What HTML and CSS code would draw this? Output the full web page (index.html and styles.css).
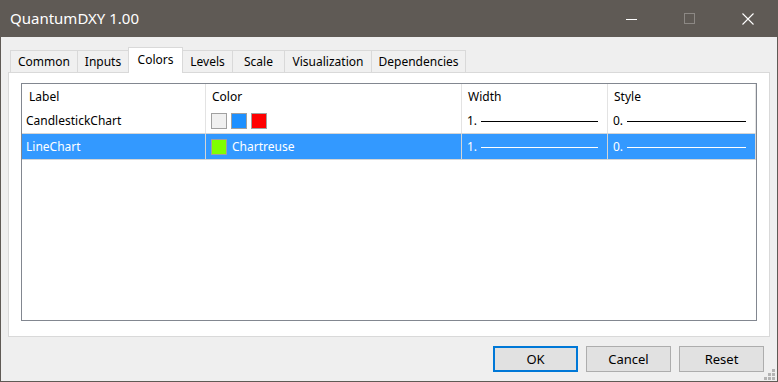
FILE: index.html
```html
<!DOCTYPE html>
<html lang="en">
<head>
  <meta charset="UTF-8">
  <title>QuantumDXY 1.00</title>
  <link rel="stylesheet" href="styles.css">
</head>
<body>
  <div class="window">
    <div class="titlebar">
      <span class="title">QuantumDXY 1.00</span>
      <div class="controls">
        <span class="ctl"><svg width="12" height="12" viewBox="0 0 12 12"><path d="M0 6.5h11" stroke="#fff" stroke-width="1"/></svg></span>
        <span class="ctl"><svg width="12" height="12" viewBox="0 0 12 12"><rect x="0.5" y="0.5" width="10" height="10" fill="none" stroke="#8c8884"/></svg></span>
        <span class="ctl"><svg width="12" height="12" viewBox="0 0 12 12"><path d="M0.5 0.5l11 11M11.5 0.5l-11 11" stroke="#fff" stroke-width="1.1"/></svg></span>
      </div>
    </div>

    <div class="content">
      <div class="tabs">
        <div class="tab t-common">Common</div>
        <div class="tab t-inputs">Inputs</div>
        <div class="tab t-colors active">Colors</div>
        <div class="tab t-levels">Levels</div>
        <div class="tab t-scale">Scale</div>
        <div class="tab t-visual">Visualization</div>
        <div class="tab t-deps">Dependencies</div>
      </div>

      <div class="panel">
        <div class="list">
          <div class="row head">
            <div class="cell">Label</div>
            <div class="cell">Color</div>
            <div class="cell">Width</div>
            <div class="cell">Style</div>
          </div>
          <div class="row">
            <div class="cell">CandlestickChart</div>
            <div class="cell">
              <span class="swatch" style="background:#f0f0f0"></span>
              <span class="swatch" style="background:#1e90ff"></span>
              <span class="swatch" style="background:#ff0000"></span>
            </div>
            <div class="cell">1. <span class="line"></span></div>
            <div class="cell">0. <span class="line"></span></div>
          </div>
          <div class="row selected">
            <div class="cell">LineChart</div>
            <div class="cell">
              <span class="swatch" style="background:#7fff00"></span>
              <span class="swatch-name">Chartreuse</span>
            </div>
            <div class="cell">1. <span class="line"></span></div>
            <div class="cell">0. <span class="line"></span></div>
          </div>
        </div>
      </div>

      <div class="buttons">
        <button class="default">OK</button>
        <button>Cancel</button>
        <button>Reset</button>
      </div>
    </div>
    <div class="grip">
      <svg width="12" height="12" viewBox="0 0 12 12" fill="#b4b4b4">
        <rect x="8" y="0" width="3" height="3"/>
        <rect x="4" y="4" width="3" height="3"/>
        <rect x="8" y="4" width="3" height="3"/>
        <rect x="0" y="8" width="3" height="3"/>
        <rect x="4" y="8" width="3" height="3"/>
        <rect x="8" y="8" width="3" height="3"/>
      </svg>
    </div>
  </div>
</body>
</html>
```

FILE: styles.css
```css
body {
  margin: 0;
  font-family: "Segoe UI", "Noto Sans", Arial, sans-serif;
  font-size: 12px;
  color: #000;
}
.window {
  position: relative;
  width: 778px;
  height: 382px;
  box-sizing: border-box;
  border: 1px solid #5f5a55;
  border-top: none;
  background: #efefef;
}
.titlebar {
  height: 37px;
  background: #5f5a55;
  color: #fff;
  display: flex;
  align-items: center;
  justify-content: space-between;
  padding-left: 9px;
}
.title {
  font-size: 15px;
  padding-bottom: 1px;
}
.controls {
  display: flex;
  height: 100%;
}
.ctl {
  width: 58px;
  display: flex;
  align-items: center;
  justify-content: center;
}
.content {
  padding: 9px 7px 0 7px;
}
.tabs {
  display: flex;
  align-items: flex-end;
  height: 26px;
  padding-left: 2px;
  position: relative;
  z-index: 1;
}
.tab {
  box-sizing: border-box;
  height: 22px;
  line-height: 22px;
  text-align: center;
  border: 1px solid #d9d9d9;
  border-bottom: none;
  border-right: none;
  background: #f0f0f0;
}
.tab:last-child {
  border-right: 1px solid #d9d9d9;
}
.t-common { width: 67px; }
.t-inputs { width: 51px; }
.t-colors { width: 55px; }
.t-levels { width: 49px; }
.t-scale { width: 52px; }
.t-visual { width: 87px; }
.t-deps { width: 95px; }
.tab.active {
  height: 26px;
  line-height: 23px;
  background: #fff;
  border-right: 1px solid #d9d9d9;
  margin-bottom: -1px;
}
.tab.active + .tab {
  border-left: none;
}
.panel {
  height: 265px;
  box-sizing: border-box;
  border: 1px solid #d9d9d9;
  background: #fff;
  padding: 10px 12px 0 12px;
}
.list {
  height: 238px;
  box-sizing: border-box;
  border: 1px solid #828790;
}
.row {
  display: grid;
  grid-template-columns: 184px 256px 146px 148px;
  height: 24px;
  border-bottom: 1px solid #fff;
}
.row.head {
  border-bottom: none;
}
.row + .row {
  height: 25px;
}
.row.selected {
  background: #3399ff;
  color: #fff;
  border-top: 1px solid #d5d5d5;
  border-bottom: 1px solid #d5d5d5;
  margin-top: -1px;
}
.cell {
  display: flex;
  align-items: center;
  padding-left: 5px;
  border-right: 1px solid #e3e3e3;
  white-space: nowrap;
}
.head .cell {
  padding-left: 6px;
}
.row .cell:first-child {
  padding-left: 4px;
}
.row.head .cell:first-child {
  padding-left: 7px;
}
.row.selected .cell {
  border-right-color: #d5d5d5;
}
.swatch {
  width: 14px;
  height: 14px;
  border: 1px solid #a0a0a0;
  margin-right: 4px;
  flex: none;
}
.swatch-name {
  margin-left: 1px;
}
.line {
  flex: 1;
  height: 1px;
  background: #000;
  margin: 1px 9px 0 4px;
}
.selected .line {
  background: #fff;
}
.buttons {
  display: flex;
  justify-content: flex-end;
  gap: 8px;
  padding: 9px 6px 0 0;
}
button {
  width: 85px;
  height: 26px;
  box-sizing: border-box;
  font-family: inherit;
  font-size: 13px;
  background: #e1e1e1;
  border: 1px solid #adadad;
  padding: 0;
}
button.default {
  border: 2px solid #0078d7;
}
.grip {
  position: absolute;
  right: 1px;
  bottom: 1px;
  height: 12px;
}
```
